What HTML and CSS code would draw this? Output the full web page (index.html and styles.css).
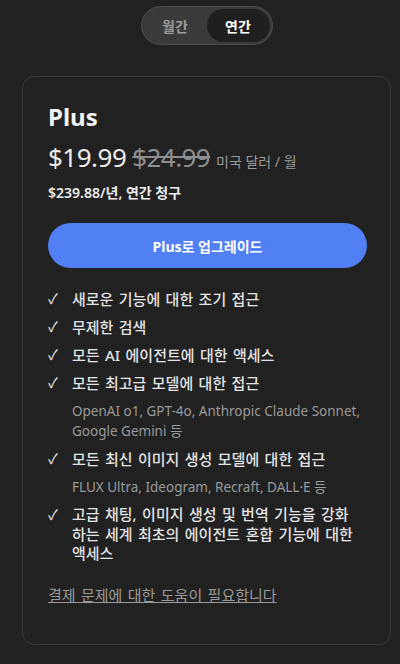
FILE: index.html
```html
<!DOCTYPE html>
<html lang="ko">
<head>
<meta charset="utf-8">
<link rel="stylesheet" href="styles.css">
</head>
<body>
<div class="page">
  <div class="toggle-wrap">
    <div class="toggle">
      <span class="opt">월간</span>
      <span class="opt active">연간</span>
    </div>
  </div>
  <div class="card">
    <h2 class="title">Plus</h2>
    <div class="price-row">
      <span class="price">$19.99</span>
      <span class="old">$24.99</span>
      <span class="unit">미국 달러 / 월</span>
    </div>
    <div class="annual">$239.88/년, 연간 청구</div>
    <button class="cta">Plus로 업그레이드</button>
    <ul class="features">
      <li><span class="check">✓</span><span>새로운 기능에 대한 조기 접근</span></li>
      <li><span class="check">✓</span><span>무제한 검색</span></li>
      <li><span class="check">✓</span><span>모든 AI 에이전트에 대한 액세스</span></li>
      <li><span class="check">✓</span><span>모든 최고급 모델에 대한 접근</span></li>
      <li class="sub">OpenAI o1, GPT-4o, Anthropic Claude Sonnet, Google Gemini 등</li>
      <li><span class="check">✓</span><span>모든 최신 이미지 생성 모델에 대한 접근</span></li>
      <li class="sub">FLUX Ultra, Ideogram, Recraft, DALL·E 등</li>
      <li class="multi"><span class="check">✓</span><span>고급 채팅, 이미지 생성 및 번역 기능을 강화<br>하는 세계 최초의 에이전트 혼합 기능에 대한<br>액세스</span></li>
    </ul>
    <a class="help" href="#">결제 문제에 대한 도움이 필요합니다</a>
  </div>
</div>
</body>
</html>
```
FILE: styles.css
```css
html, body {
  margin: 0;
  padding: 0;
  background: #212121;
  color: #ececec;
  font-family: "Noto Sans", "Noto Sans CJK KR", sans-serif;
}
.page {
  padding: 6px 9px 0 22px;
}
.toggle-wrap {
  display: flex;
  justify-content: center;
}
.toggle {
  display: flex;
  align-items: center;
  box-sizing: border-box;
  width: 132px;
  height: 39px;
  padding: 2px;
  border: 1.5px solid #4e4e4e;
  border-radius: 20px;
  background: #3a3a3a;
}
.opt {
  flex: 1;
  height: 33px;
  display: flex;
  align-items: center;
  justify-content: center;
  font-size: 14px;
  font-weight: 700;
  color: #9b9b9b;
  border-radius: 17px;
}
.opt.active {
  background: #1f1f1f;
  color: #ffffff;
}
.card {
  margin-top: 31px;
  box-sizing: border-box;
  height: 569px;
  border: 1px solid #3a3a3a;
  border-radius: 12px;
  padding: 24px 23px 0 25px;
}
.title {
  margin: 0;
  font-size: 24px;
  font-weight: 700;
  line-height: 32px;
  color: #f3f3f3;
}
.price-row {
  display: flex;
  align-items: baseline;
  margin-top: 6px;
  height: 38px;
}
.price {
  font-size: 26px;
  letter-spacing: -0.5px;
  color: #ececec;
}
.old {
  font-size: 26px;
  letter-spacing: -0.6px;
  color: #8e8e8e;
  text-decoration: line-through;
  margin-left: 6px;
}
.unit {
  font-size: 14px;
  color: #9b9b9b;
  margin-left: 6px;
}
.annual {
  margin-top: 6px;
  font-size: 14px;
  font-weight: 600;
  color: #ececec;
  line-height: 20px;
}
.cta {
  display: block;
  width: 100%;
  height: 45px;
  margin-top: 20px;
  border: none;
  border-radius: 23px;
  background: #5080f4;
  color: #ffffff;
  font-family: inherit;
  font-size: 14px;
  font-weight: 700;
}
.features {
  list-style: none;
  margin: 21px 0 0;
  padding: 0;
  display: flex;
  flex-direction: column;
  gap: 8px;
}
.features li {
  display: flex;
  font-size: 15px;
  font-weight: 500;
  line-height: 20px;
  word-spacing: 1.5px;
  color: #e3e3e3;
}
.features li.multi {
  line-height: 19.5px;
  white-space: nowrap;
}
.check {
  width: 24px;
  flex-shrink: 0;
  font-size: 14px;
  color: #d8d8d8;
}
.features li.sub {
  padding-left: 24px;
  font-size: 13.5px;
  font-weight: 400;
  word-spacing: 0;
  color: #9a9a9a;
}
.help {
  display: inline-block;
  margin-top: 21px;
  font-size: 15px;
  line-height: 20px;
  word-spacing: 1.5px;
  color: #9a9a9a;
  text-decoration: underline;
}
```
